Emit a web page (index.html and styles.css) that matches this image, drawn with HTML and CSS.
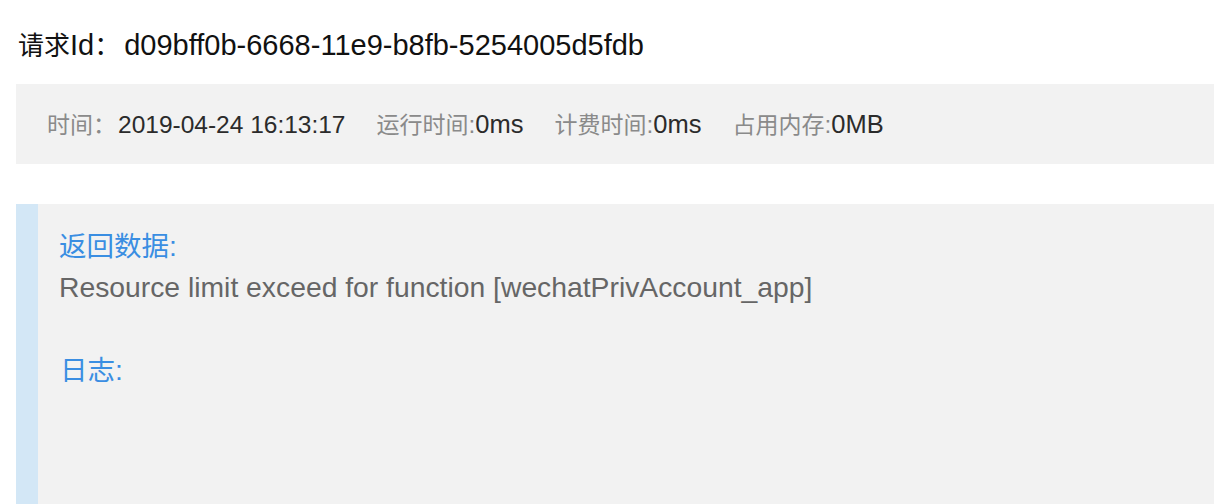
FILE: index.html
```html
<!DOCTYPE html>
<html lang="zh-CN">
<head>
<meta charset="utf-8">
<title>请求详情</title>
<link rel="stylesheet" href="styles.css">
</head>
<body>
<div class="page">
  <h1 class="req"><span class="zh">请求</span>Id<span class="zh">：</span><span class="req-id">d09bff0b-6668-11e9-b8fb-5254005d5fdb</span></h1>
  <div class="meta">
    <div class="meta-item"><span class="label">时间：</span><span class="value">2019-04-24 16:13:17</span></div>
    <div class="meta-item"><span class="label">运行时间</span><span class="label colon">:</span><span class="value short">0ms</span></div>
    <div class="meta-item"><span class="label">计费时间</span><span class="label colon">:</span><span class="value short">0ms</span></div>
    <div class="meta-item"><span class="label">占用内存</span><span class="label colon">:</span><span class="value short">0MB</span></div>
  </div>
  <div class="result">
    <div class="section-title"><span class="zh">返回数据</span>:</div>
    <div class="section-body">Resource limit exceed for function [wechatPrivAccount_app]</div>
    <div class="section-title log-title"><span class="zh">日志</span>:</div>
  </div>
</div>
</body>
</html>
```

FILE: styles.css
```css
html, body {
  margin: 0;
  padding: 0;
  background: #ffffff;
  overflow: hidden;
}
body {
  font-family: "Liberation Sans", "Noto Sans CJK SC", sans-serif;
  color: #000;
}
.page {
  padding-left: 16px;
}
.req {
  margin: 0;
  padding: 24px 0 0 2px;
  height: 40px;
  line-height: 40px;
  font-size: 29px;
  font-weight: normal;
  color: #111;
  white-space: nowrap;
}
.req .zh {
  font-family: "Noto Sans CJK SC", sans-serif;
  font-size: 26px;
}
.req-id {
  margin-left: 4px;
}
.meta {
  box-sizing: border-box;
  margin-top: 20px;
  height: 80px;
  padding-bottom: 3px;
  background: #f2f2f2;
  display: flex;
  align-items: center;
  gap: 31px;
  padding-left: 31px;
  font-size: 24.5px;
  white-space: nowrap;
}
.meta-item {
  display: flex;
  align-items: baseline;
}
.label {
  font-family: "Noto Sans CJK SC", sans-serif;
  font-size: 23px;
  color: #8a8a8a;
}
.label.colon {
  font-family: "Liberation Sans", sans-serif;
  font-size: 24.5px;
}
.meta-item:first-child .label {
  margin-right: 2px;
}
.value {
  color: #2b2b2b;
}
.value.short {
  font-size: 25.5px;
}
.result {
  margin-top: 40px;
  height: 320px;
  background: #f2f2f2;
  border-left: 22px solid #d3e7f6;
  padding: 20px 0 0 21px;
  font-size: 28.3px;
  white-space: nowrap;
}
.section-title {
  line-height: 40px;
  color: #3a8ee2;
}
.section-title .zh {
  font-family: "Noto Sans CJK SC", sans-serif;
  font-size: 27.5px;
}
.section-body {
  margin-top: 1px;
  line-height: 40px;
  color: #666;
}
.log-title {
  margin-top: 41px;
  padding-left: 1px;
}
```
